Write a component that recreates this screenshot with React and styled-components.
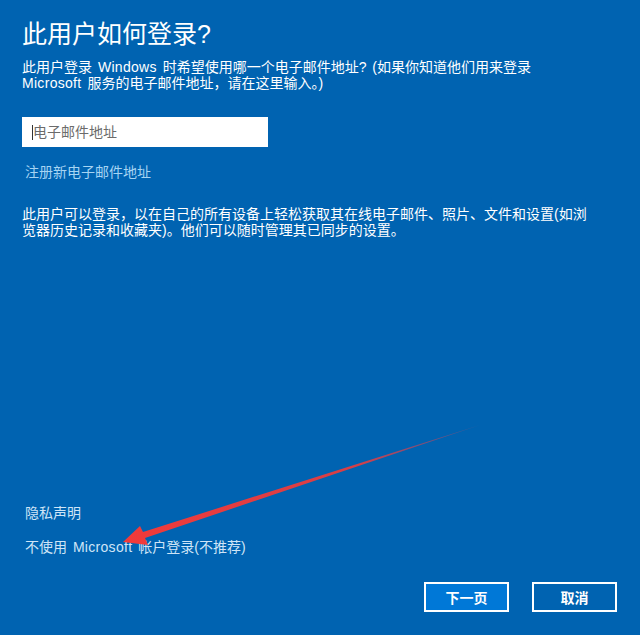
import React from 'react';
import styled, { createGlobalStyle } from 'styled-components';

const GlobalStyle = createGlobalStyle`
  html, body {
    margin: 0;
    padding: 0;
    background: #0063b1;
  }
  * {
    box-sizing: border-box;
  }
`;

const Page = styled.div`
  position: relative;
  width: 640px;
  height: 635px;
  overflow: hidden;
  background: #0063b1;
  color: #fff;
  font-family: "Liberation Sans", "Noto Sans CJK SC", sans-serif;
  display: flex;
  flex-direction: column;
  padding: 18px 23px 23px 22px;
`;

const Title = styled.h1`
  margin: 0;
  font-size: 25px;
  line-height: 32px;
  font-weight: 400;
`;

const Text = styled.p`
  margin: ${p => p.$top || 0}px 0 0;
  font-size: 14px;
  line-height: 16px;
  word-spacing: 2px;
  white-space: nowrap;
`;

// latin words read a bit wider in the Segoe UI original
const Latin = styled.span`
  letter-spacing: 0.3px;
`;

const Field = styled.div`
  position: relative;
  margin-top: 26px;
  width: 246px;
  height: 30px;
`;

const Input = styled.input`
  width: 100%;
  height: 100%;
  border: none;
  outline: none;
  background: #fff;
  padding: 0 10px 0 11px;
  font-family: inherit;
  font-size: 14px;
  color: #222;

  &::placeholder {
    color: #6b6b6b;
  }
`;

const Caret = styled.span`
  position: absolute;
  left: 10px;
  top: 8px;
  width: 1px;
  height: 15px;
  background: #333;
`;

const Link = styled.a`
  display: block;
  margin-top: ${p => p.$top || 0}px;
  padding-left: 3px;
  font-size: 14px;
  line-height: 20px;
  word-spacing: 2px;
  color: ${p => p.$pale ? '#cfe5f7' : '#a6d4f3'};
  text-decoration: none;
  cursor: pointer;
`;

const Spacer = styled.div`
  flex: 1;
`;

const Footer = styled.div`
  display: flex;
  flex-direction: column;
`;

const Buttons = styled.div`
  display: flex;
  justify-content: flex-end;
  gap: 23px;
  margin-top: 25px;
`;

const Button = styled.button`
  width: 85px;
  height: 30px;
  border: 2px solid #fff;
  background: ${p => p.$primary ? '#0078d7' : 'transparent'};
  color: #fff;
  font-family: inherit;
  font-size: 14px;
  font-weight: 700;
  padding: 0;
  cursor: pointer;
`;

const Annotation = styled.svg`
  position: absolute;
  left: 0;
  top: 0;
  pointer-events: none;
`;

function Arrow() {
  return (
    <Annotation width="640" height="635" viewBox="0 0 640 635">
      <defs>
        <linearGradient id="arrowFade" x1="480" y1="425" x2="123" y2="542" gradientUnits="userSpaceOnUse">
          <stop offset="0" stopColor="#d9455a" stopOpacity="0.3" />
          <stop offset="0.35" stopColor="#ee3b3b" stopOpacity="0.9" />
          <stop offset="1" stopColor="#f23a3a" />
        </linearGradient>
      </defs>
      <polygon
        points="123,542 140,526 143,532 480,425 145,538 148,545"
        fill="url(#arrowFade)"
      />
    </Annotation>
  );
}

export default function App() {
  return (
    <>
      <GlobalStyle />
      <Page>
        <Title>此用户如何登录?</Title>
        <Text $top={9}>
          此用户登录 <Latin>Windows</Latin> 时希望使用哪一个电子邮件地址? (如果你知道他们用来登录
          <br />
          <Latin>Microsoft</Latin> 服务的电子邮件地址，请在这里输入。)
        </Text>
        <Field>
          <Input type="text" placeholder="电子邮件地址" />
          <Caret />
        </Field>
        <Link $top={15}>注册新电子邮件地址</Link>
        <Text $top={24}>
          此用户可以登录，以在自己的所有设备上轻松获取其在线电子邮件、照片、文件和设置(如浏
          <br />
          览器历史记录和收藏夹)。他们可以随时管理其已同步的设置。
        </Text>
        <Spacer />
        <Footer>
          <Link $pale>隐私声明</Link>
          <Link $pale $top={14}>不使用 <Latin>Microsoft</Latin> 帐户登录(不推荐)</Link>
          <Buttons>
            <Button $primary>下一页</Button>
            <Button>取消</Button>
          </Buttons>
        </Footer>
        <Arrow />
      </Page>
    </>
  );
}
